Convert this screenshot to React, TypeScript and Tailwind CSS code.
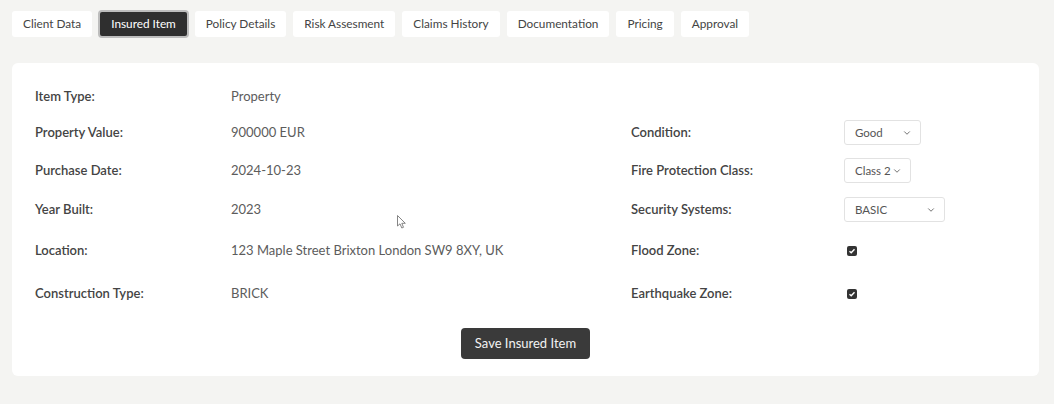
import React from 'react';
import { ChevronDown } from 'lucide-react';

const tabs = [
  'Client Data',
  'Insured Item',
  'Policy Details',
  'Risk Assesment',
  'Claims History',
  'Documentation',
  'Pricing',
  'Approval',
];

type Field = { label: string; value: React.ReactNode };

type Row = { h: string; left: Field; right?: Field };

function Select({ value, width }: { value: string; width: string }) {
  return (
    <div
      className={`flex items-center justify-between whitespace-nowrap h-[25px] pl-[10px] pr-[8px] border border-[#e2e2e2] rounded-[3px] bg-white text-[11.5px] text-[#555] ${width}`}
    >
      <span>{value}</span>
      <ChevronDown size={10} strokeWidth={2.2} className="text-[#666]" />
    </div>
  );
}

function Check() {
  return (
    <span className="ml-[3px] flex items-center justify-center w-[10px] h-[10px] rounded-[2px] bg-[#333]">
      <svg width="8" height="8" viewBox="0 0 8 8">
        <path d="M1.5 4.2 L3.2 5.8 L6.5 2.2" fill="none" stroke="#fff" strokeWidth="1.4" />
      </svg>
    </span>
  );
}

const rows: Row[] = [
  { h: 'h-[34px]', left: { label: 'Item Type:', value: 'Property' } },
  {
    h: 'h-[37px]',
    left: { label: 'Property Value:', value: '900000 EUR' },
    right: { label: 'Condition:', value: <Select value="Good" width="w-[77px]" /> },
  },
  {
    h: 'h-[39px]',
    left: { label: 'Purchase Date:', value: '2024-10-23' },
    right: { label: 'Fire Protection Class:', value: <Select value="Class 2" width="w-[67px]" /> },
  },
  {
    h: 'h-[39px]',
    left: { label: 'Year Built:', value: '2023' },
    right: { label: 'Security Systems:', value: <Select value="BASIC" width="w-[101px]" /> },
  },
  {
    h: 'h-[43px]',
    left: { label: 'Location:', value: '123 Maple Street Brixton London SW9 8XY, UK' },
    right: { label: 'Flood Zone:', value: <Check /> },
  },
  {
    h: 'h-[44px]',
    left: { label: 'Construction Type:', value: 'BRICK' },
    right: { label: 'Earthquake Zone:', value: <Check /> },
  },
];

export default function App() {
  return (
    <div
      className="relative min-h-[404px] bg-[#f4f4f2] pl-[12px] pr-[15px] pt-[11px]"
      style={{ fontFamily: 'Lato, "Open Sans", sans-serif' }}
    >
      <div className="flex gap-[7px]">
        {tabs.map((t) =>
          t === 'Insured Item' ? (
            <div
              key={t}
              className="-my-[1px] -mx-[1px] h-[28px] px-[11px] flex items-center rounded-[4px] bg-[#2f2f2f] border-2 border-[#bdbdbd] text-[11.8px] text-white"
            >
              {t}
            </div>
          ) : (
            <div
              key={t}
              className="h-[26px] px-[11px] flex items-center rounded-[3px] bg-white text-[11.8px] text-[#444]"
            >
              {t}
            </div>
          )
        )}
      </div>

      <div className="mt-[26px] bg-white rounded-[6px] pl-[23px] pr-[23px] pt-[17px] pb-[17px]">
        {rows.map((r) => (
          <div key={r.left.label} className={`flex items-center ${r.h} text-[13px]`}>
            <div className="w-[196px] font-semibold text-[#444]">{r.left.label}</div>
            <div className="w-[400px] text-[#5c5c5c]">{r.left.value}</div>
            {r.right && (
              <>
                <div className="w-[213px] font-semibold text-[#444]">{r.right.label}</div>
                <div className="flex items-center text-[#5c5c5c]">{r.right.value}</div>
              </>
            )}
          </div>
        ))}
        <div className="mt-[12px] flex justify-center">
          <button className="h-[31px] px-[14px] rounded-[4px] bg-[#3a3a3a] text-[13px] text-[#f2f2f2]">
            Save Insured Item
          </button>
        </div>
      </div>

      <svg className="absolute left-[397px] top-[215px]" width="10" height="15" viewBox="0 0 10 15">
        <path
          d="M0.5 0.5 L0.5 11 L3 8.8 L4.8 13 L6.5 12.3 L4.8 8.3 L8.3 8.3 Z"
          fill="#fff"
          stroke="#777"
          strokeWidth="0.9"
        />
      </svg>
    </div>
  );
}
